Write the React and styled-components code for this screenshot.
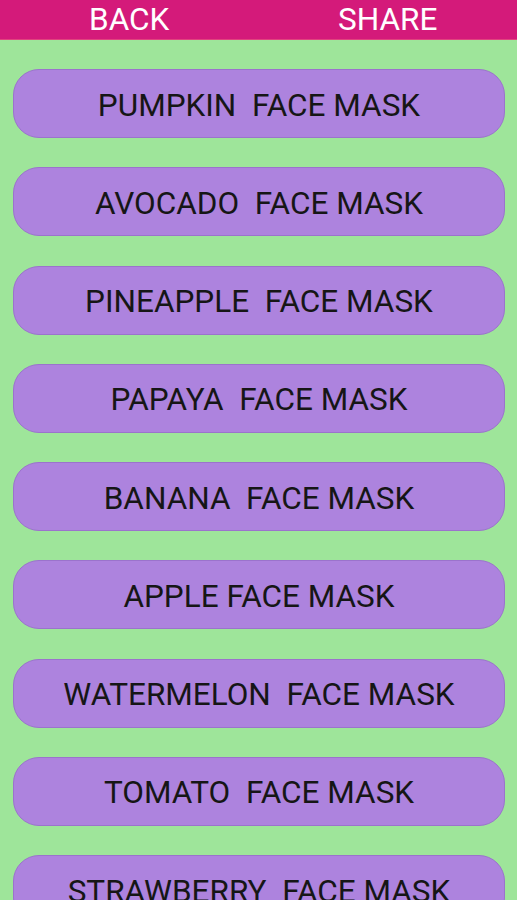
import React from "react";
import styled, { createGlobalStyle } from "styled-components";

const Global = createGlobalStyle`
  html, body { margin: 0; padding: 0; background: #9ee59a; }
  body { font-family: Roboto, "Liberation Sans", sans-serif; }
  #root { min-height: 900px; }
`;

const Page = styled.div`
  width: 517px;
  height: 900px;
  overflow: hidden;
  background: #9ee59a;
`;

const TopBar = styled.div`
  height: 39px;
  background: #d41a7a;
  border-bottom: 1px solid #e0447f;
  display: grid;
  grid-template-columns: 1fr 1fr;
  align-items: center;
`;

const BarButton = styled.button`
  background: none;
  border: none;
  color: #ffffff;
  font-family: Roboto, "Liberation Sans", sans-serif;
  font-size: 31.5px;
  line-height: 39px;
  padding: 0;
  text-align: center;
`;

const List = styled.div`
  display: flex;
  flex-direction: column;
  gap: 29.25px;
  padding: 29px 12px 0 13px;
`;

const Item = styled.button`
  height: 69px;
  border-radius: 26px;
  background: #ad83de;
  border: 1px solid #9b73cc;
  color: #161616;
  font-family: Roboto, "Liberation Sans", sans-serif;
  font-size: 31.5px;
  white-space: pre;
  display: flex;
  align-items: center;
  justify-content: center;
  padding: 3px 0 0;
  flex-shrink: 0;
`;

const items = [
  "PUMPKIN  FACE MASK",
  "AVOCADO  FACE MASK",
  "PINEAPPLE  FACE MASK",
  "PAPAYA  FACE MASK",
  "BANANA  FACE MASK",
  "APPLE FACE MASK",
  "WATERMELON  FACE MASK",
  "TOMATO  FACE MASK",
  "STRAWBERRY  FACE MASK",
];

export default function App() {
  return (
    <Page>
      <Global />
      <TopBar>
        <BarButton>BACK</BarButton>
        <BarButton>SHARE</BarButton>
      </TopBar>
      <List>
        {items.map((t) => (
          <Item key={t}>{t}</Item>
        ))}
      </List>
    </Page>
  );
}
